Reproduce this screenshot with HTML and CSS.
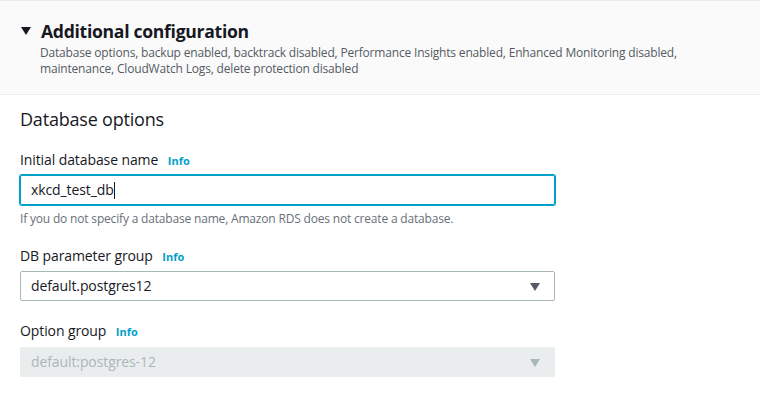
FILE: index.html
```html
<!DOCTYPE html>
<html>
<head>
<meta charset="utf-8">
<link rel="stylesheet" href="styles.css">
</head>
<body>
<div class="panel">
  <div class="header">
    <div class="title-row">
      <span class="caret"></span>
      <h2 class="title">Additional configuration</h2>
    </div>
    <p class="desc">Database options, backup enabled, backtrack disabled, Performance Insights enabled, Enhanced Monitoring disabled, maintenance, CloudWatch Logs, delete protection disabled</p>
  </div>
  <div class="content">
    <h3 class="section">Database options</h3>
    <div class="field">
      <div class="label">Initial database name <span class="info">Info</span></div>
      <div class="input focused">xkcd_test_db<span class="cursor"></span></div>
      <div class="hint">If you do not specify a database name, Amazon RDS does not create a database.</div>
    </div>
    <div class="field field-plain">
      <div class="label">DB parameter group <span class="info">Info</span></div>
      <div class="input select">default.postgres12<span class="arrow"></span></div>
    </div>
    <div class="field field-plain field-disabled">
      <div class="label">Option group <span class="info">Info</span></div>
      <div class="input select disabled">default:postgres-12<span class="arrow"></span></div>
    </div>
  </div>
</div>
</body>
</html>
```
FILE: styles.css
```css
* { box-sizing: border-box; }
body {
  margin: 0;
  background: #ffffff;
  font-family: "Open Sans", "Noto Sans", sans-serif;
  color: #16191f;
}
.panel {
  width: 760px;
  border-top: 1px solid #eaeded;
}
.header {
  background: #fafafa;
  border-bottom: 1px solid #eaeded;
  padding: 18px 20px 17px 20px;
}
.title-row {
  display: flex;
  align-items: center;
  gap: 10px;
}
.caret {
  width: 0;
  height: 0;
  border-left: 5px solid transparent;
  border-right: 5px solid transparent;
  border-top: 8px solid #16191f;
  margin-left: 1px;
}
.title {
  margin: 0;
  font-size: 17.6px;
  font-weight: 700;
  line-height: 24px;
  letter-spacing: -0.3px;
}
.desc {
  margin: 2px 0 0 20px;
  font-size: 12px;
  line-height: 16px;
  color: #545b64;
  width: 670px;
  letter-spacing: -0.18px;
}
.content {
  padding: 11px 20px 0 20px;
}
.section {
  margin: 0 0 18px 0;
  font-size: 18px;
  font-weight: 400;
  line-height: 26px;
  letter-spacing: -0.2px;
}
.field {
  margin-bottom: 19px;
}
.field-plain {
  margin-bottom: 20px;
}
.label {
  font-size: 14px;
  line-height: 20px;
  margin-bottom: 4px;
  letter-spacing: -0.1px;
}
.field-disabled .label {
  margin-bottom: 5px;
}
.info {
  color: #00a1c9;
  font-weight: 700;
  font-size: 11px;
  margin-left: 6px;
  letter-spacing: 0;
}
.input {
  position: relative;
  width: 535px;
  height: 30px;
  border: 1px solid #aab7b8;
  border-radius: 2px;
  padding: 0 10px;
  font-size: 14px;
  line-height: 28px;
  color: #16191f;
  display: flex;
  align-items: center;
  letter-spacing: -0.1px;
}
.input.focused {
  border-color: #00a1c9;
  box-shadow: 0 0 0 1px #00a1c9;
}
.cursor {
  display: inline-block;
  width: 1px;
  height: 17px;
  background: #16191f;
}
.hint {
  margin-top: 6px;
  font-size: 12px;
  line-height: 16px;
  color: #687078;
  letter-spacing: -0.18px;
}
.arrow {
  position: absolute;
  right: 14px;
  top: 11px;
  width: 0;
  height: 0;
  border-left: 5px solid transparent;
  border-right: 5px solid transparent;
  border-top: 8px solid #545b64;
}
.disabled {
  background: #eaeded;
  border-color: #eaeded;
  color: #aab7b8;
}
.disabled .arrow {
  border-top-color: #aab7b8;
}
```
